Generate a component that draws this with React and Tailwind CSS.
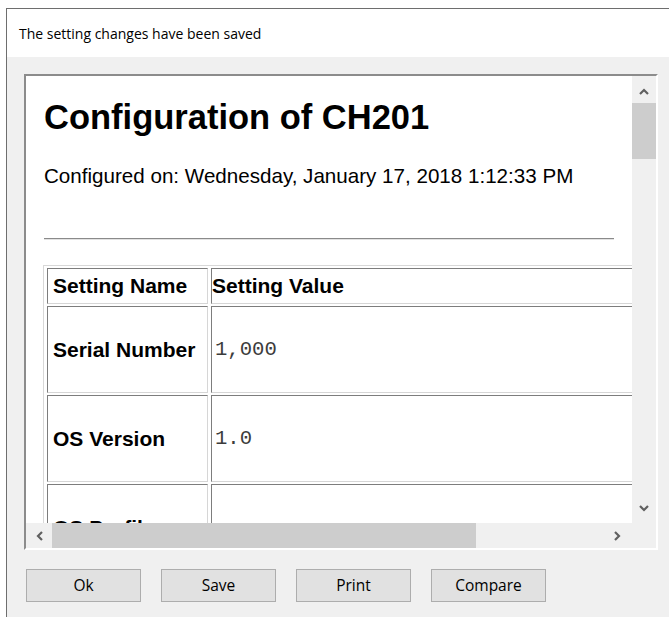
import React from "react";

// Small filled chevron used on the scrollbar buttons
function Chevron({ dir }) {
  const rot = { up: 0, down: 180, left: 270, right: 90 }[dir];
  return (
    <svg width="10" height="10" viewBox="0 0 10 10" style={{ transform: `rotate(${rot}deg)` }}>
      <path d="M1 7 L5 3 L9 7" fill="none" stroke="#606060" strokeWidth="2.2" strokeLinejoin="miter" />
    </svg>
  );
}

const rows = [
  { name: "Serial Number", value: "1,000" },
  { name: "OS Version", value: "1.0" },
  { name: "OS Profile", value: "" },
];

function Cell({ children, className = "" }) {
  return (
    <td
      className={
        "border border-t-[#7d7d7d] border-l-[#7d7d7d] border-r-[#d6d6d6] border-b-[#d6d6d6] align-middle " +
        className
      }
    >
      {children}
    </td>
  );
}

export default function App() {
  return (
    <div className="w-[669px] h-[617px] bg-white overflow-hidden pl-[6px] pt-[8px]">
      <div className="flex flex-col h-full border-l border-t border-[#6e6e6e]">
        {/* message header */}
        <div className="h-[48px] shrink-0 bg-white flex items-center pl-[12px] pt-[1px] text-[14px] text-black font-['Open_Sans',sans-serif]">
          The setting changes have been saved
        </div>

        {/* dialog body */}
        <div className="flex-1 bg-[#f0f0f0] pl-[17px] pt-[17px]">
          <div className="w-[634px] h-[476px] border-2 border-t-[#8c8c8c] border-l-[#8c8c8c] border-r-white border-b-white grid grid-cols-[1fr_24px] grid-rows-[1fr_25px]">
            {/* document viewport */}
            <div className="bg-white overflow-hidden pl-[18px] font-['Liberation_Sans',Arial,sans-serif] text-black min-w-0">
              <h1 className="mt-[21px] text-[34.5px] leading-[40px] font-bold whitespace-nowrap">
                Configuration of CH201
              </h1>
              <p className="mt-[27px] text-[20.6px] leading-[24px] whitespace-nowrap">
                Configured on: Wednesday, January 17, 2018 1:12:33 PM
              </p>
              <div className="mt-[50px] w-[570px] h-[2px] border-t border-t-[#8a8a8a] border-b border-b-[#e2e2e2]" />
              <table className="mt-[25px] -ml-[1px] w-[760px] min-w-[760px] table-fixed border-separate border-spacing-x-[3px] border-spacing-y-[2px] border border-t-[#d8d8d8] border-l-[#d8d8d8] border-r-[#808080] border-b-[#808080] text-[21px] leading-[24px]">
                <colgroup>
                  <col className="w-[161px]" />
                  <col />
                </colgroup>
                <tbody>
                  <tr>
                    <Cell className="h-[36px] pl-[5px] text-left font-bold whitespace-nowrap">Setting Name</Cell>
                    <Cell className="h-[36px] pl-0 text-left font-bold whitespace-nowrap">Setting Value</Cell>
                  </tr>
                  {rows.map((r) => (
                    <tr key={r.name}>
                      <Cell className="h-[87px] pl-[5px] font-bold whitespace-nowrap">{r.name}</Cell>
                      <Cell className="h-[87px] pl-[3px] font-['Liberation_Mono','Courier_New',monospace] text-[20.6px] text-[#3c3c3c] whitespace-nowrap">
                        {r.value}
                      </Cell>
                    </tr>
                  ))}
                </tbody>
              </table>
            </div>

            {/* vertical scrollbar */}
            <div className="bg-[#f0f0f0] flex flex-col">
              <div className="h-[27px] flex items-center justify-center pt-[4px]">
                <Chevron dir="up" />
              </div>
              <div className="h-[56px] bg-[#cdcdcd]" />
              <div className="flex-1" />
              <div className="h-[30px] flex items-center justify-center">
                <Chevron dir="down" />
              </div>
            </div>

            {/* horizontal scrollbar */}
            <div className="bg-[#f0f0f0] flex">
              <div className="w-[26px] flex items-center justify-center pl-[2px]">
                <Chevron dir="left" />
              </div>
              <div className="w-[424px] bg-[#cdcdcd]" />
              <div className="flex-1" />
              <div className="w-[30px] flex items-center justify-center">
                <Chevron dir="right" />
              </div>
            </div>

            {/* scrollbar corner */}
            <div className="bg-[#f0f0f0]" />
          </div>

          {/* action buttons */}
          <div className="mt-[19px] ml-[2px] flex gap-[20px] font-['Open_Sans',sans-serif] text-[15.5px] text-black">
            {["Ok", "Save", "Print", "Compare"].map((t) => (
              <button
                key={t}
                className="w-[115px] h-[33px] bg-[#e1e1e1] border border-[#adadad] flex items-center justify-center"
              >
                {t}
              </button>
            ))}
          </div>
        </div>
      </div>
    </div>
  );
}
